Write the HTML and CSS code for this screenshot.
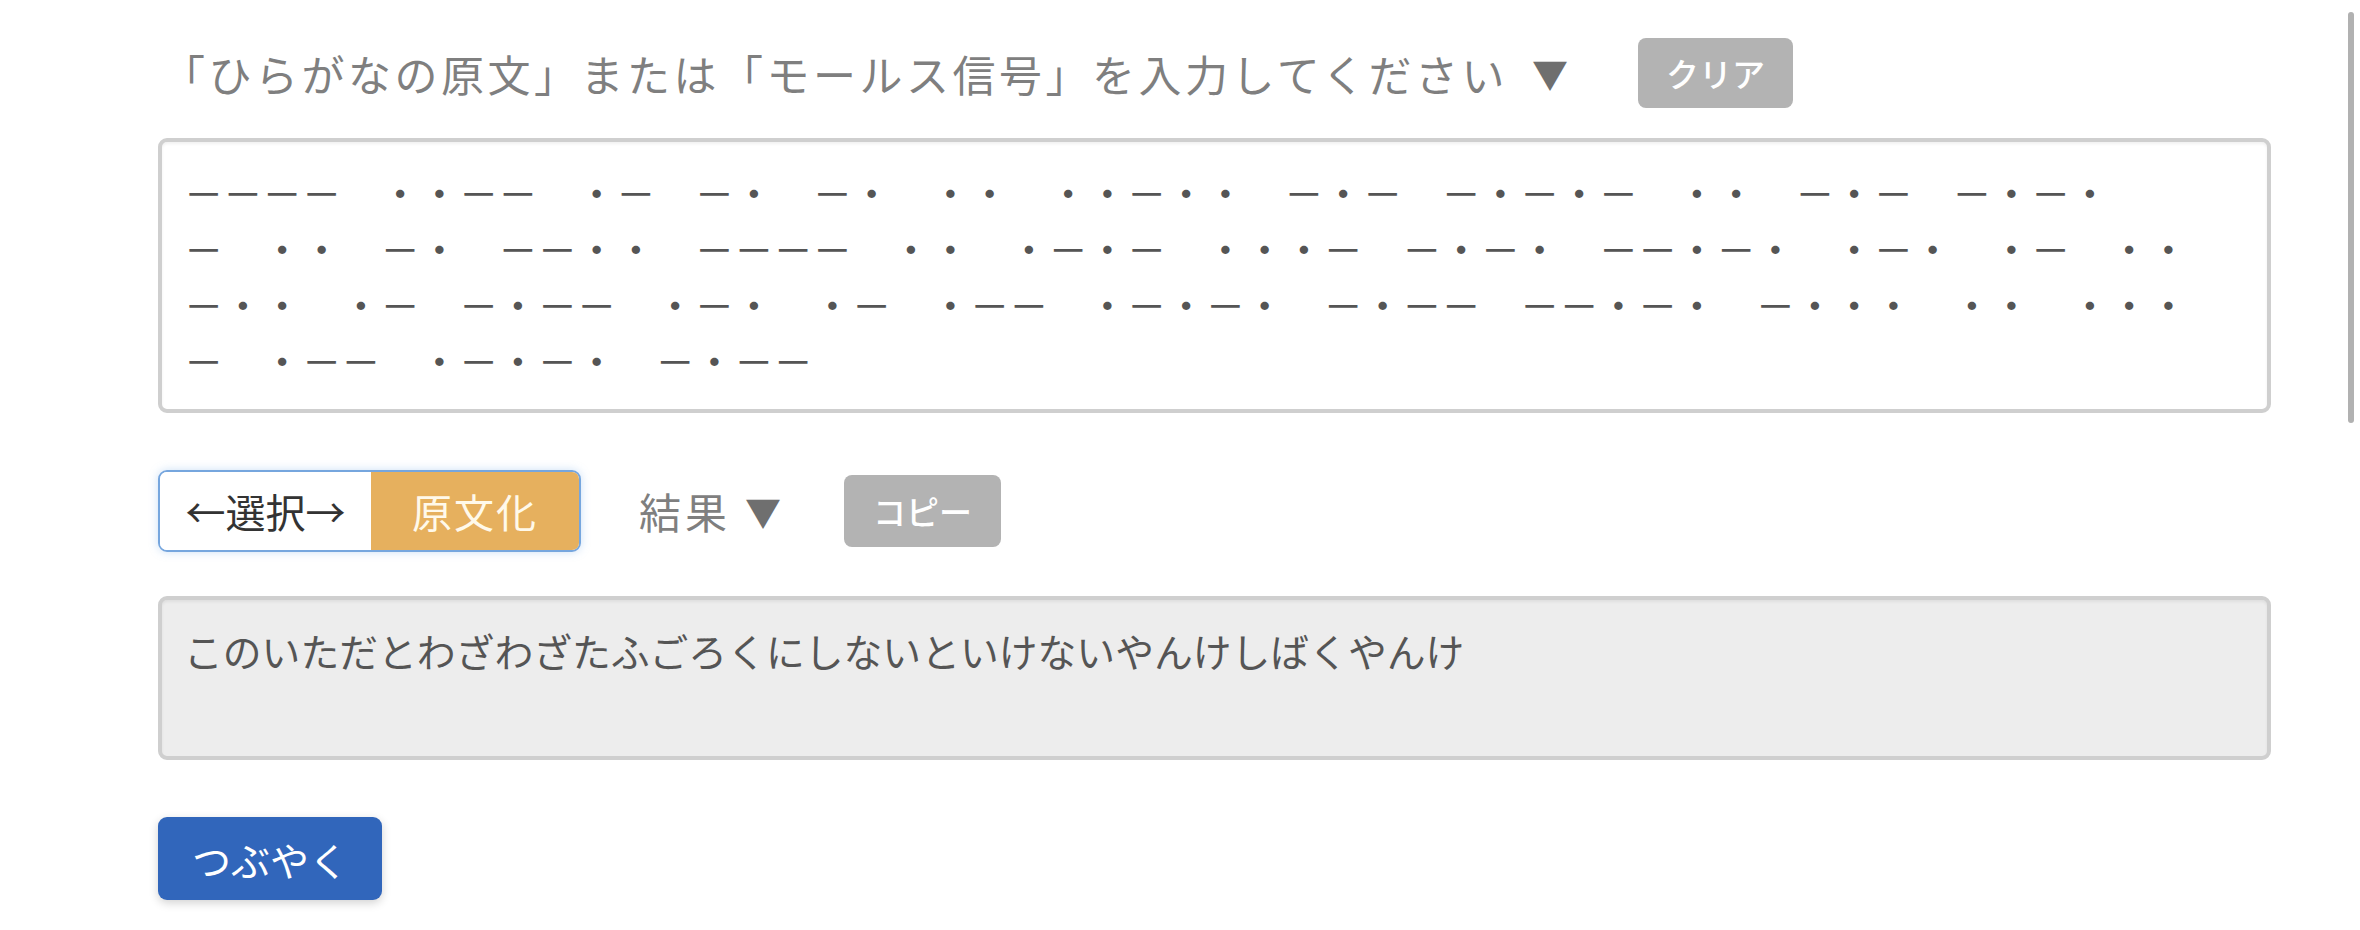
FILE: index.html
```html
<!DOCTYPE html>
<html lang="ja">
<head>
<meta charset="utf-8">
<title>モールス信号変換</title>
<link rel="stylesheet" href="styles.css">
</head>
<body>
<div class="page">
  <div class="row head-row">
    <h2 class="label head-label">「ひらがなの原文」または「モールス信号」を入力してください</h2>
    <span class="tri tri-head">▼</span>
    <button class="btn-gray btn-clear" type="button">クリア</button>
  </div>
  <textarea class="ta ta-input" spellcheck="false">－－－－　・・－－　・－　－・　－・　・・　・・－・・　－・－　－・－・－　・・　－・－　－・－・
－　・・　－・　－－・・　－－－－　・・　・－・－　・・・－　－・－・　－－・－・　・－・　・－　・・
－・・　・－　－・－－　・－・　・－　・－－　・－・－・　－・－－　－－・－・　－・・・　・・　・・・
－　・－－　・－・－・　－・－－</textarea>
  <div class="row tool-row">
    <div class="toggle">
      <span class="seg seg-select">←選択→</span>
      <span class="seg seg-active">原文化</span>
    </div>
    <span class="label result-label">結果</span>
    <span class="tri tri-result">▼</span>
    <button class="btn-gray btn-copy" type="button">コピー</button>
  </div>
  <textarea class="ta ta-output" readonly>このいただとわざわざたふごろくにしないといけないやんけしばくやんけ</textarea>
  <button class="btn-tweet" type="button">つぶやく</button>
</div>
<div class="scroll-thumb"></div>
</body>
</html>
```

FILE: styles.css
```css
html, body {
  margin: 0;
  padding: 0;
  background: #ffffff;
}

body {
  font-family: "Noto Sans CJK JP", "Noto Sans", sans-serif;
  color: #555555;
  width: 2360px;
  height: 930px;
  overflow: hidden;
}

.page {
  padding: 38px 0 0 158px;
  width: 2113px;
}

.row {
  display: flex;
  align-items: center;
}

.head-row {
  height: 70px;
  margin-bottom: 30px;
}

.label {
  margin: 0;
  font-size: 43px;
  font-weight: 400;
  letter-spacing: 3.5px;
  color: #7f7f7f;
  line-height: 1;
}

.head-label {
  padding-left: 4px;
}

.tri {
  font-size: 36px;
  color: #6f6f6f;
  line-height: 1;
}

.tri-head {
  margin-left: 24px;
}

.btn-gray {
  border: none;
  background: #b3b3b3;
  color: #ffffff;
  font-family: "Noto Sans CJK JP", sans-serif;
  font-size: 33px;
  font-weight: 500;
  border-radius: 8px;
  padding: 0;
  cursor: pointer;
}

.btn-clear {
  width: 155px;
  height: 70px;
  margin-left: 70px;
}

.ta {
  display: block;
  box-sizing: border-box;
  width: 2113px;
  margin: 0;
  padding: 22px;
  border: 4px solid #cfcfcf;
  border-radius: 9px;
  box-shadow: inset 0 2px 3px rgba(0, 0, 0, 0.06);
  font-family: "Noto Sans CJK JP", sans-serif;
  font-size: 39.3px;
  line-height: 56px;
  color: #555555;
  resize: none;
  overflow: hidden;
  outline: none;
  white-space: pre;
}

.ta-input {
  height: 275px;
  background: #ffffff;
  margin-bottom: 57px;
}

.tool-row {
  height: 82px;
  margin-bottom: 44px;
}

.toggle {
  display: grid;
  grid-template-columns: 211px 208px;
  height: 82px;
  box-sizing: border-box;
  border: 2px solid #76a6de;
  border-radius: 9px;
  overflow: hidden;
  box-shadow: 0 0 10px rgba(110, 165, 230, 0.35);
}

.seg {
  display: flex;
  align-items: center;
  justify-content: center;
  font-size: 40px;
}

.seg-select {
  background: #ffffff;
  color: #333333;
}

.seg-active {
  background: #e6b05e;
  color: #fff9ea;
  letter-spacing: 2px;
}

.result-label {
  margin-left: 58px;
  font-size: 42px;
  letter-spacing: 4px;
}

.tri-result {
  margin-left: 14px;
}

.btn-copy {
  width: 157px;
  height: 72px;
  margin-left: 63px;
}

.ta-output {
  height: 164px;
  background: #ededed;
  margin-bottom: 57px;
  font-size: 38.8px;
}

.btn-tweet {
  display: block;
  width: 224px;
  height: 83px;
  border: none;
  border-radius: 9px;
  background: #3166bb;
  color: #ffffff;
  font-family: "Noto Sans CJK JP", sans-serif;
  font-size: 39px;
  padding: 0;
  box-shadow: 0 3px 10px rgba(0, 0, 0, 0.18);
  cursor: pointer;
}

.scroll-thumb {
  position: fixed;
  top: 12px;
  right: 6px;
  width: 6px;
  height: 411px;
  border-radius: 3px;
  background: #b1b1b1;
}
```
